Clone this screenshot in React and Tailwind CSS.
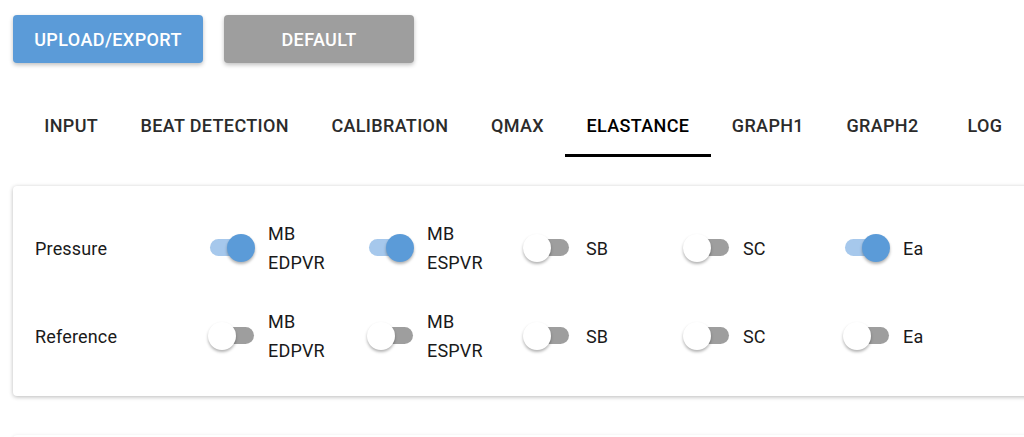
const tabs = ['Input', 'Beat Detection', 'Calibration', 'Qmax', 'Elastance', 'Graph1', 'Graph2', 'Log'];

const rows = [
  { name: 'Pressure', values: [true, true, false, false, true] },
  { name: 'Reference', values: [false, false, false, false, false] },
];

const columns = [['MB', 'EDPVR'], ['MB', 'ESPVR'], ['SB'], ['SC'], ['Ea']];

function Switch({ on }) {
  return (
    <div className="relative w-[47px] h-[28px] shrink-0">
      <div
        className={`absolute left-[2px] top-[5px] w-[44px] h-[17px] rounded-full ${on ? 'bg-[#a6c8ec]' : 'bg-[#9e9e9e]'}`}
      ></div>
      <div
        className={`absolute top-0 w-[28px] h-[28px] rounded-full shadow-[0_2px_3px_rgba(0,0,0,0.3)] ${on ? 'left-[19px] bg-[#5b9bd8]' : 'left-0 bg-white'}`}
      ></div>
    </div>
  );
}

export default function App() {
  return (
    <div className="w-[1024px] h-[437px] overflow-hidden bg-white px-[13px] pt-[15px] font-['Roboto',sans-serif]">
      <div className="flex gap-[21px]">
        <button className="w-[190px] h-12 rounded bg-[#5b9bd8] text-white text-[18px] font-medium uppercase tracking-[0.4px] shadow-[0_2px_4px_rgba(0,0,0,0.25)]">
          Upload/Export
        </button>
        <button className="w-[190px] h-12 rounded bg-[#9e9e9e] text-white text-[18px] font-medium uppercase tracking-[0.4px] shadow-[0_2px_4px_rgba(0,0,0,0.25)]">
          Default
        </button>
      </div>

      <div className="flex ml-[10px] mt-[30px]">
        {tabs.map((t) => (
          <div
            key={t}
            className={`shrink-0 h-16 min-w-[90px] px-[21.25px] pt-[3px] flex items-center justify-center border-b-[3px] text-[18px] font-medium uppercase tracking-[0.35px] whitespace-nowrap ${t === 'Elastance' ? 'border-black text-black' : 'border-transparent text-[#2b2b2b]'}`}
          >
            {t}
          </div>
        ))}
      </div>

      <div className="mt-[29px] w-[1040px] h-[210px] rounded bg-white shadow-[0_1px_4px_rgba(0,0,0,0.28)] pl-[22px] pt-[33px] flex flex-col gap-[30px]">
        {rows.map((r) => (
          <div key={r.name} className="flex items-center h-[58px]">
            <div className="w-[173px] text-[18px] tracking-[0.17px] text-[#1a1a1a]">{r.name}</div>
            {r.values.map((v, i) => (
              <div key={i} className={`flex items-center ${i === 0 ? 'w-[159px]' : i === 1 ? 'w-[156px]' : 'w-[160px]'}`}>
                <Switch on={v} />
                <div className={`text-[18px] leading-[29px] tracking-[0.17px] text-[#1a1a1a] ${i === 2 ? 'ml-[16px]' : 'ml-[13px]'}`}>
                  {columns[i].map((l) => (
                    <div key={l}>{l}</div>
                  ))}
                </div>
              </div>
            ))}
          </div>
        ))}
      </div>

      <div className="mt-[39px] w-[1040px] h-[40px] rounded bg-white shadow-[0_1px_4px_rgba(0,0,0,0.12)]"></div>
    </div>
  );
}
